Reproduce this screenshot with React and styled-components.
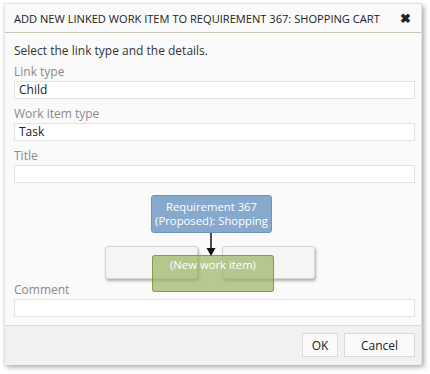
import React from "react";
import styled, { createGlobalStyle } from "styled-components";

const GlobalStyle = createGlobalStyle`
  html, body {
    margin: 0;
    padding: 0;
    background: #ffffff;
  }
  body {
    font-family: "Open Sans", "Noto Sans", "Liberation Sans", sans-serif;
    color: #222;
  }
`;

const Page = styled.div`
  width: 430px;
  height: 374px;
  padding: 3px 0 0 4px;
  box-sizing: border-box;
`;

const Dialog = styled.div`
  width: 418px;
  height: 361px;
  background: #fafafa;
  border: 1px solid #e2e2e2;
  box-sizing: border-box;
  box-shadow: 2px 3px 5px rgba(0, 0, 0, 0.35);
  display: flex;
  flex-direction: column;
`;

const Header = styled.div`
  height: 28px;
  flex-shrink: 0;
  display: flex;
  align-items: center;
  justify-content: space-between;
  padding: 0 10px 0 9px;
  border-bottom: 1px solid #cbc7b6;
  font-size: 11.1px;
  color: #222;
  white-space: nowrap;
`;

const CloseButton = styled.span`
  font-size: 13px;
  font-weight: bold;
  color: #222;
  line-height: 1;
`;

const Body = styled.div`
  flex: 1;
  padding: 10px 6px 8px 9px;
  display: flex;
  flex-direction: column;
`;

const Intro = styled.div`
  font-size: 12px;
  line-height: 16px;
  color: #333;
  margin-bottom: 6px;
`;

const Label = styled.div`
  font-size: 12px;
  line-height: 14px;
  color: #8a8a8a;
  margin-top: ${(p) => p.$gap || 0}px;
  margin-bottom: 2px;
`;

const Input = styled.div`
  height: 16px;
  flex-shrink: 0;
  background: #ffffff;
  border: 1px solid #e3e3e3;
  padding: 0 4px;
  font-size: 12px;
  line-height: 16px;
  color: #222;
`;

const Diagram = styled.div`
  position: relative;
  height: 100px;
  flex-shrink: 0;
`;

const Node = styled.div`
  position: absolute;
  box-sizing: border-box;
  border-radius: 3px;
  display: flex;
  justify-content: center;
  font-size: 11.3px;
  line-height: 14px;
  text-align: center;
  color: #fff;
`;

const ParentNode = styled(Node)`
  left: 137px;
  top: 12px;
  width: 121px;
  height: 38px;
  background: #86a9cd;
  border: 1px solid #6f94bb;
  align-items: center;
`;

const SiblingNode = styled(Node)`
  top: 63px;
  width: 93px;
  height: 33px;
  background: #f5f5f5;
  border: 1px solid #d6d6d6;
  box-shadow: 1px 2px 3px rgba(0, 0, 0, 0.3);
`;

const NewNode = styled(Node)`
  left: 138px;
  top: 72px;
  width: 122px;
  height: 37px;
  background: rgba(151, 177, 91, 0.68);
  border: 1px solid rgba(118, 145, 60, 0.8);
  padding-top: 2px;
  z-index: 2;
`;

const Arrow = styled.svg`
  position: absolute;
  left: 191px;
  top: 50px;
  z-index: 3;
`;

const Footer = styled.div`
  height: 38px;
  flex-shrink: 0;
  border-top: 1px solid #dcdcdc;
  background: #f1f1f1;
  display: flex;
  justify-content: flex-end;
  align-items: center;
  gap: 6px;
  padding: 0 6px 1px 0;
`;

const Button = styled.div`
  height: 24px;
  width: ${(p) => p.$width}px;
  box-sizing: border-box;
  background: #fafafa;
  border: 1px solid #d9d9d9;
  display: flex;
  align-items: center;
  justify-content: center;
  font-size: 12px;
  color: #222;
`;

const App = () => {
  return (
    <Page>
      <GlobalStyle />
      <Dialog>
        <Header>
          <span>ADD NEW LINKED WORK ITEM TO REQUIREMENT 367: SHOPPING CART</span>
          <CloseButton>✖</CloseButton>
        </Header>
        <Body>
          <Intro>Select the link type and the details.</Intro>
          <Label>Link type</Label>
          <Input>Child</Input>
          <Label $gap={8}>Work item type</Label>
          <Input>Task</Input>
          <Label $gap={8}>Title</Label>
          <Input />
          <Diagram>
            <ParentNode>
              Requirement 367
              <br />
              (Proposed): Shopping
            </ParentNode>
            <SiblingNode style={{ left: 91 }} />
            <SiblingNode style={{ left: 208 }} />
            <NewNode>(New work item)</NewNode>
            <Arrow width="12" height="24" viewBox="0 0 12 24">
              <line x1="6" y1="0" x2="6" y2="16" stroke="#111" strokeWidth="1.5" />
              <path d="M1.5 15 L10.5 15 L6 23 Z" fill="#111" />
            </Arrow>
          </Diagram>
          <Label>Comment</Label>
          <Input />
        </Body>
        <Footer>
          <Button $width={36}>OK</Button>
          <Button $width={71}>Cancel</Button>
        </Footer>
      </Dialog>
    </Page>
  );
};

export default App;
